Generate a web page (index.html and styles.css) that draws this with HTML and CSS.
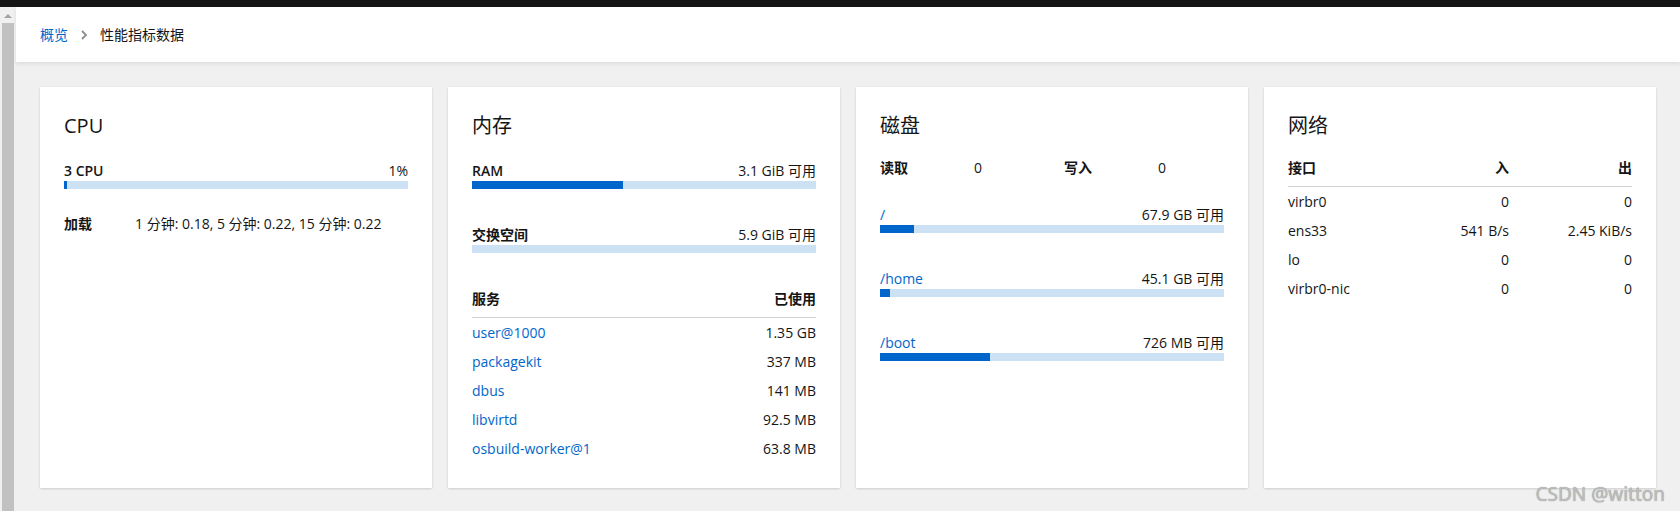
FILE: index.html
```html
<!DOCTYPE html>
<html lang="zh-CN">
<head>
<meta charset="utf-8">
<title>性能指标数据</title>
<link rel="stylesheet" href="styles.css">
</head>
<body>
<div class="topbar"></div>
<div class="frame">
  <div class="scroll-strip">
    <div class="scroll-arrow"></div>
    <div class="scroll-thumb"></div>
  </div>
  <div class="main">
    <header class="page-header">
      <nav class="breadcrumb">
        <a class="crumb-link" href="#">概览</a>
        <svg class="crumb-sep" width="6" height="10" viewBox="0 0 6 10"><path d="M1 1 L5 5 L1 9" fill="none" stroke="#8a8d90" stroke-width="1.8"/></svg>
        <span class="crumb-current">性能指标数据</span>
      </nav>
    </header>
    <section class="cards">
      <article class="card">
        <h2 class="card-title">CPU</h2>
        <div class="row">
          <span class="label">3 CPU</span>
          <span>1%</span>
        </div>
        <div class="bar"><div class="fill" style="width:1%"></div></div>
        <div class="load">
          <span class="label">加载</span>
          <span>1 分钟: 0.18, 5 分钟: 0.22, 15 分钟: 0.22</span>
        </div>
      </article>

      <article class="card">
        <h2 class="card-title">内存</h2>
        <div class="usage">
          <div class="row">
            <span class="label">RAM</span>
            <span>3.1 GiB 可用</span>
          </div>
          <div class="bar"><div class="fill" style="width:44%"></div></div>
        </div>
        <div class="usage">
          <div class="row">
            <span class="label">交换空间</span>
            <span>5.9 GiB 可用</span>
          </div>
          <div class="bar"><div class="fill" style="width:0%"></div></div>
        </div>
        <div class="table services">
          <div class="thead">
            <span class="label">服务</span>
            <span class="label right">已使用</span>
          </div>
          <div class="trow"><a href="#">user@1000</a><span class="right">1.35 GB</span></div>
          <div class="trow"><a href="#">packagekit</a><span class="right">337 MB</span></div>
          <div class="trow"><a href="#">dbus</a><span class="right">141 MB</span></div>
          <div class="trow"><a href="#">libvirtd</a><span class="right">92.5 MB</span></div>
          <div class="trow"><a href="#">osbuild-worker@1</a><span class="right">63.8 MB</span></div>
        </div>
      </article>

      <article class="card">
        <h2 class="card-title">磁盘</h2>
        <div class="io">
          <span class="label">读取</span>
          <span>0</span>
          <span class="label">写入</span>
          <span>0</span>
        </div>
        <div class="disks">
          <div class="usage">
            <div class="row">
              <a class="mount" href="#">/</a>
              <span>67.9 GB 可用</span>
            </div>
            <div class="bar"><div class="fill" style="width:10%"></div></div>
          </div>
          <div class="usage">
            <div class="row">
              <a class="mount" href="#">/home</a>
              <span>45.1 GB 可用</span>
            </div>
            <div class="bar"><div class="fill" style="width:3%"></div></div>
          </div>
          <div class="usage">
            <div class="row">
              <a class="mount" href="#">/boot</a>
              <span>726 MB 可用</span>
            </div>
            <div class="bar"><div class="fill" style="width:32%"></div></div>
          </div>
        </div>
      </article>

      <article class="card">
        <h2 class="card-title">网络</h2>
        <div class="table network">
          <div class="thead">
            <span class="label">接口</span>
            <span class="label right">入</span>
            <span class="label right">出</span>
          </div>
          <div class="trow"><span>virbr0</span><span class="right">0</span><span class="right">0</span></div>
          <div class="trow"><span>ens33</span><span class="right">541 B/s</span><span class="right">2.45 KiB/s</span></div>
          <div class="trow"><span>lo</span><span class="right">0</span><span class="right">0</span></div>
          <div class="trow"><span>virbr0-nic</span><span class="right">0</span><span class="right">0</span></div>
        </div>
      </article>
    </section>
  </div>
</div>
<div class="watermark">CSDN @witton</div>
</body>
</html>
```

FILE: styles.css
```css
* {
  box-sizing: border-box;
}

html, body {
  margin: 0;
  padding: 0;
  height: 511px;
  overflow: hidden;
}

body {
  background: #f0f0f0;
  color: #151515;
  font-family: "Open Sans", "Noto Sans CJK SC", sans-serif;
  font-size: 14px;
  line-height: 21px;
  position: relative;
}

a {
  color: #0066cc;
  text-decoration: none;
}

.topbar {
  height: 7px;
  background: #151515;
}

.frame {
  display: flex;
  height: 504px;
}

.scroll-strip {
  width: 16px;
  flex: none;
  background: #f0f0f0;
  display: flex;
  flex-direction: column;
  align-items: center;
  padding-top: 7px;
}

.scroll-arrow {
  width: 0;
  height: 0;
  border-left: 4px solid transparent;
  border-right: 4px solid transparent;
  border-bottom: 4px solid #a3a3a3;
  margin-bottom: 5px;
}

.scroll-thumb {
  width: 12px;
  flex: 1;
  background: #c1c1c1;
}

.main {
  flex: 1;
  min-width: 0;
}

.page-header {
  height: 55px;
  background: #fff;
  display: flex;
  align-items: center;
  padding-left: 24px;
  box-shadow: 0 2px 4px rgba(3, 3, 3, 0.08);
  position: relative;
}

.breadcrumb {
  display: flex;
  align-items: center;
  font-size: 14px;
}

.crumb-sep {
  margin: 0 13px 0 13px;
}

.crumb-current {
  color: #151515;
}

.cards {
  display: grid;
  grid-template-columns: repeat(4, 1fr);
  gap: 16px;
  padding: 25px 24px 24px;
  align-items: stretch;
}

.card {
  background: #fff;
  padding: 24px;
  min-height: 401px;
  box-shadow: 0 1px 2px rgba(3, 3, 3, 0.12), 0 0 2px rgba(3, 3, 3, 0.06);
}

.card-title {
  margin: 0 0 19px;
  font-size: 20px;
  line-height: 30px;
  font-weight: 400;
}

.row {
  display: flex;
  justify-content: space-between;
}

.label {
  font-weight: 600;
}

.bar {
  height: 8px;
  background: #cce1f4;
}

.fill {
  height: 100%;
  background: #0066cc;
}

.load {
  display: grid;
  grid-template-columns: 71px 1fr;
  margin-top: 24px;
}

.usage + .usage {
  margin-top: 35px;
}

.table .right {
  text-align: right;
}

.thead {
  border-bottom: 1px solid #d2d2d2;
  padding-bottom: 8px;
}

.trow {
  padding: 4px 0;
}

.services {
  margin-top: 35px;
}

.services .thead,
.services .trow {
  display: grid;
  grid-template-columns: 1fr auto;
}

.network {
  margin-top: -3px;
}

.network .thead,
.network .trow {
  display: grid;
  grid-template-columns: 1fr 123px 123px;
}

.io {
  display: grid;
  grid-template-columns: 94px 90px 94px 1fr;
  margin-top: -3px;
}

.disks {
  margin-top: 26px;
}

.mount {
  font-weight: 500;
}

.watermark {
  position: absolute;
  right: 15px;
  bottom: 6px;
  font-family: "Noto Sans", sans-serif;
  font-size: 19px;
  font-weight: 400;
  color: #bdbdbd;
  text-shadow: 0 0 1px rgba(70, 70, 70, 0.6);
}
```
